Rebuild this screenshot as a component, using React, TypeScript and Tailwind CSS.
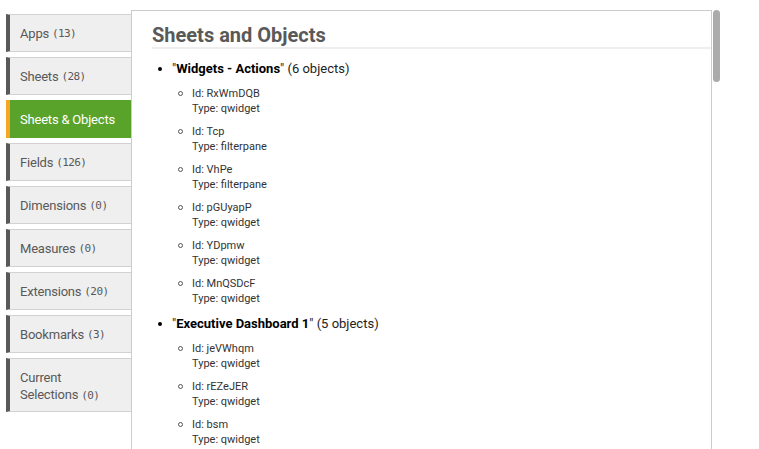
const TABS: { label: string; count?: string; active?: boolean }[] = [
  { label: "Apps", count: "(13)" },
  { label: "Sheets", count: "(28)" },
  { label: "Sheets & Objects", active: true },
  { label: "Fields", count: "(126)" },
  { label: "Dimensions", count: "(0)" },
  { label: "Measures", count: "(0)" },
  { label: "Extensions", count: "(20)" },
  { label: "Bookmarks", count: "(3)" },
];

interface SheetEntry {
  name: string;
  count: number;
  objects: { id: string; type: string }[];
}

// only the objects that fit in view are listed
const SHEETS: SheetEntry[] = [
  {
    name: "Widgets - Actions",
    count: 6,
    objects: [
      { id: "RxWmDQB", type: "qwidget" },
      { id: "Tcp", type: "filterpane" },
      { id: "VhPe", type: "filterpane" },
      { id: "pGUyapP", type: "qwidget" },
      { id: "YDpmw", type: "qwidget" },
      { id: "MnQSDcF", type: "qwidget" },
    ],
  },
  {
    name: "Executive Dashboard 1",
    count: 5,
    objects: [
      { id: "jeVWhqm", type: "qwidget" },
      { id: "rEZeJER", type: "qwidget" },
      { id: "bsm", type: "qwidget" },
    ],
  },
];

function Count({ children }: { children: string }) {
  return (
    <span className="ml-[3px] font-['DejaVu_Sans_Mono',monospace] text-[11px] tracking-[-0.6px]">
      {children}
    </span>
  );
}

function Tab({ label, count, active }: { label: string; count?: string; active?: boolean }) {
  return (
    <div
      className={
        active
          ? "flex h-[38px] items-center border-l-4 border-[#f5a623] bg-[#5aa32b] pl-[10px] pt-[2px] tracking-[-0.2px] text-white"
          : "flex h-[38px] items-center border-y border-l-4 border-y-[#d2d2d2] border-l-[#595959] bg-[#efefef] pl-[10px] pt-[2px] tracking-[-0.2px] text-[#595959]"
      }
    >
      {label}
      {count && <Count>{count}</Count>}
    </div>
  );
}

export default function App() {
  return (
    <div className="flex h-[449px] w-[759px] overflow-hidden bg-white pt-[10px] font-['Roboto',sans-serif]">
      <nav className="flex w-[131px] shrink-0 flex-col gap-[5px] pl-[6px] pt-[4px] text-[13px]">
        {TABS.map((t) => (
          <Tab key={t.label} {...t} />
        ))}
        <div className="flex h-[54px] flex-col justify-center border-y border-l-4 border-y-[#d2d2d2] border-l-[#595959] bg-[#efefef] pl-[10px] pt-[2px] leading-[17px] tracking-[-0.2px] text-[#595959]">
          <span>Current</span>
          <span>
            Selections<Count>(0)</Count>
          </span>
        </div>
      </nav>

      <main className="h-[460px] w-[581px] shrink-0 overflow-hidden border border-[#cccccc]">
        <h1 className="ml-[20px] mt-[12px] border-b-2 border-[#eeeeee] text-[20px] font-bold leading-[24px] text-[#595959]">
          Sheets and Objects
        </h1>
        <div className="ml-[20px] mt-[11px] flex flex-col gap-[9px]">
          {SHEETS.map((s) => (
            <div key={s.name}>
              <div className="flex h-[18px] items-center text-[13px] text-[#222]">
                <span className="ml-[6px] mr-[10px] h-[4px] w-[4px] rounded-full bg-black" />
                <span>
                  "<b className="text-black">{s.name}</b>" ({s.count} objects)
                </span>
              </div>
              <div className="mt-[8px] flex flex-col gap-[8px]">
                {s.objects.map((o) => (
                  <div key={o.id} className="flex items-start text-[11px] leading-[15px] text-[#333]">
                    <span className="ml-[26px] mr-[9px] mt-[5px] h-[5px] w-[5px] shrink-0 rounded-full border border-[#555]" />
                    <div className="flex flex-col">
                      <span>Id: {o.id}</span>
                      <span>Type: {o.type}</span>
                    </div>
                  </div>
                ))}
              </div>
            </div>
          ))}
        </div>
      </main>

      <div className="ml-[1px] h-[72px] w-[7px] shrink-0 rounded-full bg-[#ababab]" />
    </div>
  );
}
